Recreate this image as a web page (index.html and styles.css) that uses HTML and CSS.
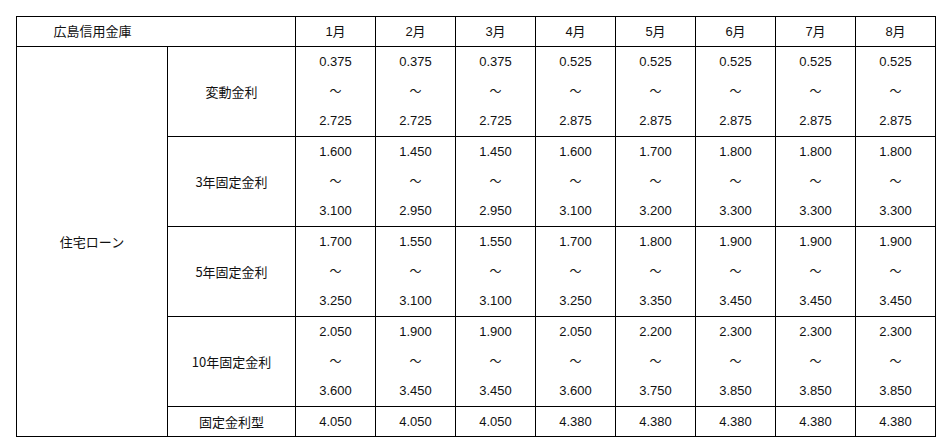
FILE: index.html
```html
<!DOCTYPE html>
<html lang="ja">
<head>
<meta charset="utf-8">
<link rel="stylesheet" href="styles.css">
</head>
<body>
<table class="rates">
  <colgroup>
    <col class="c-product">
    <col class="c-type">
    <col class="c-month"><col class="c-month"><col class="c-month"><col class="c-month">
    <col class="c-month"><col class="c-month"><col class="c-month"><col class="c-month">
  </colgroup>
  <thead>
    <tr class="head">
      <th colspan="2" class="bank"><span class="bank-name">広島信用金庫</span></th>
      <th>1月</th><th>2月</th><th>3月</th><th>4月</th><th>5月</th><th>6月</th><th>7月</th><th>8月</th>
    </tr>
  </thead>
  <tbody>
    <tr class="group">
      <td rowspan="5" class="product">住宅ローン</td>
      <td class="type">変動金利</td>
      <td class="range"><span>0.375</span><span class="tilde">～</span><span>2.725</span></td>
      <td class="range"><span>0.375</span><span class="tilde">～</span><span>2.725</span></td>
      <td class="range"><span>0.375</span><span class="tilde">～</span><span>2.725</span></td>
      <td class="range"><span>0.525</span><span class="tilde">～</span><span>2.875</span></td>
      <td class="range"><span>0.525</span><span class="tilde">～</span><span>2.875</span></td>
      <td class="range"><span>0.525</span><span class="tilde">～</span><span>2.875</span></td>
      <td class="range"><span>0.525</span><span class="tilde">～</span><span>2.875</span></td>
      <td class="range"><span>0.525</span><span class="tilde">～</span><span>2.875</span></td>
    </tr>
    <tr class="group">
      <td class="type">3年固定金利</td>
      <td class="range"><span>1.600</span><span class="tilde">～</span><span>3.100</span></td>
      <td class="range"><span>1.450</span><span class="tilde">～</span><span>2.950</span></td>
      <td class="range"><span>1.450</span><span class="tilde">～</span><span>2.950</span></td>
      <td class="range"><span>1.600</span><span class="tilde">～</span><span>3.100</span></td>
      <td class="range"><span>1.700</span><span class="tilde">～</span><span>3.200</span></td>
      <td class="range"><span>1.800</span><span class="tilde">～</span><span>3.300</span></td>
      <td class="range"><span>1.800</span><span class="tilde">～</span><span>3.300</span></td>
      <td class="range"><span>1.800</span><span class="tilde">～</span><span>3.300</span></td>
    </tr>
    <tr class="group">
      <td class="type">5年固定金利</td>
      <td class="range"><span>1.700</span><span class="tilde">～</span><span>3.250</span></td>
      <td class="range"><span>1.550</span><span class="tilde">～</span><span>3.100</span></td>
      <td class="range"><span>1.550</span><span class="tilde">～</span><span>3.100</span></td>
      <td class="range"><span>1.700</span><span class="tilde">～</span><span>3.250</span></td>
      <td class="range"><span>1.800</span><span class="tilde">～</span><span>3.350</span></td>
      <td class="range"><span>1.900</span><span class="tilde">～</span><span>3.450</span></td>
      <td class="range"><span>1.900</span><span class="tilde">～</span><span>3.450</span></td>
      <td class="range"><span>1.900</span><span class="tilde">～</span><span>3.450</span></td>
    </tr>
    <tr class="group">
      <td class="type">10年固定金利</td>
      <td class="range"><span>2.050</span><span class="tilde">～</span><span>3.600</span></td>
      <td class="range"><span>1.900</span><span class="tilde">～</span><span>3.450</span></td>
      <td class="range"><span>1.900</span><span class="tilde">～</span><span>3.450</span></td>
      <td class="range"><span>2.050</span><span class="tilde">～</span><span>3.600</span></td>
      <td class="range"><span>2.200</span><span class="tilde">～</span><span>3.750</span></td>
      <td class="range"><span>2.300</span><span class="tilde">～</span><span>3.850</span></td>
      <td class="range"><span>2.300</span><span class="tilde">～</span><span>3.850</span></td>
      <td class="range"><span>2.300</span><span class="tilde">～</span><span>3.850</span></td>
    </tr>
    <tr class="single">
      <td class="type">固定金利型</td>
      <td>4.050</td><td>4.050</td><td>4.050</td><td>4.380</td>
      <td>4.380</td><td>4.380</td><td>4.380</td><td>4.380</td>
    </tr>
  </tbody>
</table>
</body>
</html>
```

FILE: styles.css
```css
html, body {
  margin: 0;
  padding: 0;
  background: #ffffff;
}

body {
  padding: 16px 0 0 16px;
  font-family: "Liberation Sans", Arial, "Noto Sans CJK JP", sans-serif;
  font-size: 13px;
  color: #111111;
}

.rates {
  border-collapse: collapse;
  table-layout: fixed;
  width: 920px;
}

.c-product { width: 151px; }
.c-type { width: 128px; }
.c-month { width: 80px; }

.rates th,
.rates td {
  border: 1px solid #000000;
  padding: 0;
  text-align: center;
  vertical-align: middle;
  font-weight: normal;
  line-height: 29px;
}

.head th {
  height: 28px;
  line-height: 28px;
  font-family: "Liberation Sans", "Noto Sans CJK JP", sans-serif;
}

.bank {
  text-align: left !important;
}

.bank-name {
  display: inline-block;
  width: 151px;
  text-align: center;
}

.product,
.type,
.bank-name {
  font-family: "Noto Sans CJK JP", sans-serif;
  font-size: 13px;
}

.group td {
  height: 89px;
}

.range span {
  display: block;
  height: 30px;
  line-height: 30px;
}

.range span:first-child {
  height: 29px;
  line-height: 29px;
}

.range .tilde {
  font-family: "Noto Sans CJK JP", sans-serif;
  font-size: 12px;
}

.single td {
  height: 29px;
}
```
